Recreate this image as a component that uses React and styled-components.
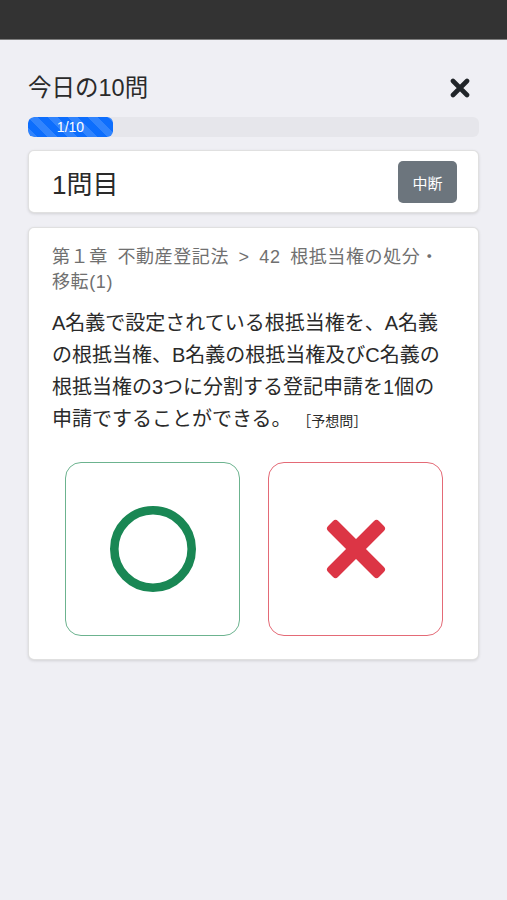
import React from 'react';
import styled, {createGlobalStyle} from 'styled-components';

const GlobalStyle = createGlobalStyle`
    body {
        margin: 0;
        background: #efeff4;
        font-family: "Liberation Sans", "Noto Sans CJK JP", sans-serif;
        color: #2a2a2a;
    }
`;

const StatusBar = styled.div`
    height: 39px;
    background: #333333;
    border-bottom: 1px solid #7d7d7d;
`;

const Page = styled.main`
    padding: 34px 28px 40px;
`;

const Header = styled.header`
    display: flex;
    justify-content: space-between;
    align-items: center;
`;

const Title = styled.h1`
    margin: 0;
    font-size: 23.5px;
    font-weight: 400;
    line-height: 28px;
`;

const CloseButton = styled.button`
    display: flex;
    border: none;
    background: none;
    padding: 0;
    margin-right: 9px;
    color: #212529;
`;

const Track = styled.div`
    margin-top: 15px;
    height: 20px;
    border-radius: 6px;
    background: #e6e6eb;
    overflow: hidden;
    display: flex;
`;

const Bar = styled.div`
    display: flex;
    align-items: center;
    justify-content: center;
    border-radius: 6px;
    background-color: #0d6efd;
    background-image: linear-gradient(45deg, rgba(255,255,255,.15) 25%, transparent 25%, transparent 50%, rgba(255,255,255,.15) 50%, rgba(255,255,255,.15) 75%, transparent 75%, transparent);
    background-size: 20px 20px;
    color: #fff;
    font-size: 14px;
`;

const Card = styled.section`
    margin-top: ${p => p.gap}px;
    background: #fff;
    border: 1px solid rgba(0,0,0,.12);
    border-radius: 6px;
    box-shadow: 0 1px 3px rgba(0,0,0,.12);
`;

const QuestionHead = styled.div`
    display: flex;
    justify-content: space-between;
    align-items: center;
    padding: 10px 21px 9px 23px;
`;

const Number = styled.h2`
    margin: 0;
    font-size: 26px;
    font-weight: 400;
`;

const PauseButton = styled.button`
    width: 59px;
    height: 42px;
    border: none;
    border-radius: 5px;
    background: #6c757d;
    color: #fff;
    font-family: inherit;
    font-size: 15px;
`;

const QuestionBody = styled.div`
    padding: 17px 26px 23px 23px;
`;

const Chapter = styled.div`
    color: #707070;
    font-size: 18px;
    line-height: 25px;
    letter-spacing: 0.6px;
    word-spacing: 4px;
`;

const Question = styled.p`
    margin: 12px 0 0;
    font-size: 20px;
    line-height: 32px;
`;

const Tag = styled.small`
    font-size: 14px;
    line-height: 1;
`;

const Answers = styled.div`
    display: flex;
    justify-content: center;
    gap: 28px;
    margin-top: 27px;
    padding-left: 4px;
`;

const AnswerButton = styled.button`
    width: 175px;
    height: 174px;
    display: flex;
    align-items: center;
    justify-content: center;
    padding: 0;
    background: #fff;
    border: 1.5px solid ${p => p.tone};
    border-radius: 16px;
`;

const CloseIcon = () => (
    <svg width="20" height="20" viewBox="0 0 20 20">
        <path d="M3 3 L17 17 M17 3 L3 17" stroke="currentColor" strokeWidth="4.6" strokeLinecap="round" />
    </svg>
);

const CircleMark = () => (
    <svg width="90" height="90" viewBox="0 0 90 90">
        <circle cx="45" cy="45" r="38.7" fill="none" stroke="#198754" strokeWidth="8.6" />
    </svg>
);

const CrossMark = () => (
    <svg width="64" height="64" viewBox="0 0 64 64">
        <g fill="#dc3545" transform="rotate(45 32 32)">
            <rect x="25" y="-4" width="14" height="72" rx="3.5" />
            <rect x="-4" y="25" width="72" height="14" rx="3.5" />
        </g>
    </svg>
);

export default function App(){
    const current = 1;
    const total = 10;
    return (
        <>
            <GlobalStyle/>
            <StatusBar/>
            <Page>
                <Header>
                    <Title>今日の10問</Title>
                    <CloseButton aria-label="閉じる"><CloseIcon/></CloseButton>
                </Header>
                <Track>
                    <Bar style={{width: `${current / total * 100}%`, minWidth: 85}}>{current}/{total}</Bar>
                </Track>
                <Card gap={13}>
                    <QuestionHead>
                        <Number>{current}問目</Number>
                        <PauseButton>中断</PauseButton>
                    </QuestionHead>
                </Card>
                <Card gap={14}>
                    <QuestionBody>
                        <Chapter>第１章 不動産登記法 &gt; 42 根抵当権の処分・<br/>移転(1)</Chapter>
                        <Question>
                            A名義で設定されている根抵当権を、A名義の根抵当権、B名義の根抵当権及びC名義の根抵当権の3つに分割する登記申請を1個の申請ですることができる。 <Tag>［予想問］</Tag>
                        </Question>
                        <Answers>
                            <AnswerButton tone="#6cb38f" aria-label="正しい"><CircleMark/></AnswerButton>
                            <AnswerButton tone="#e46a76" aria-label="誤り"><CrossMark/></AnswerButton>
                        </Answers>
                    </QuestionBody>
                </Card>
            </Page>
        </>
    );
}
